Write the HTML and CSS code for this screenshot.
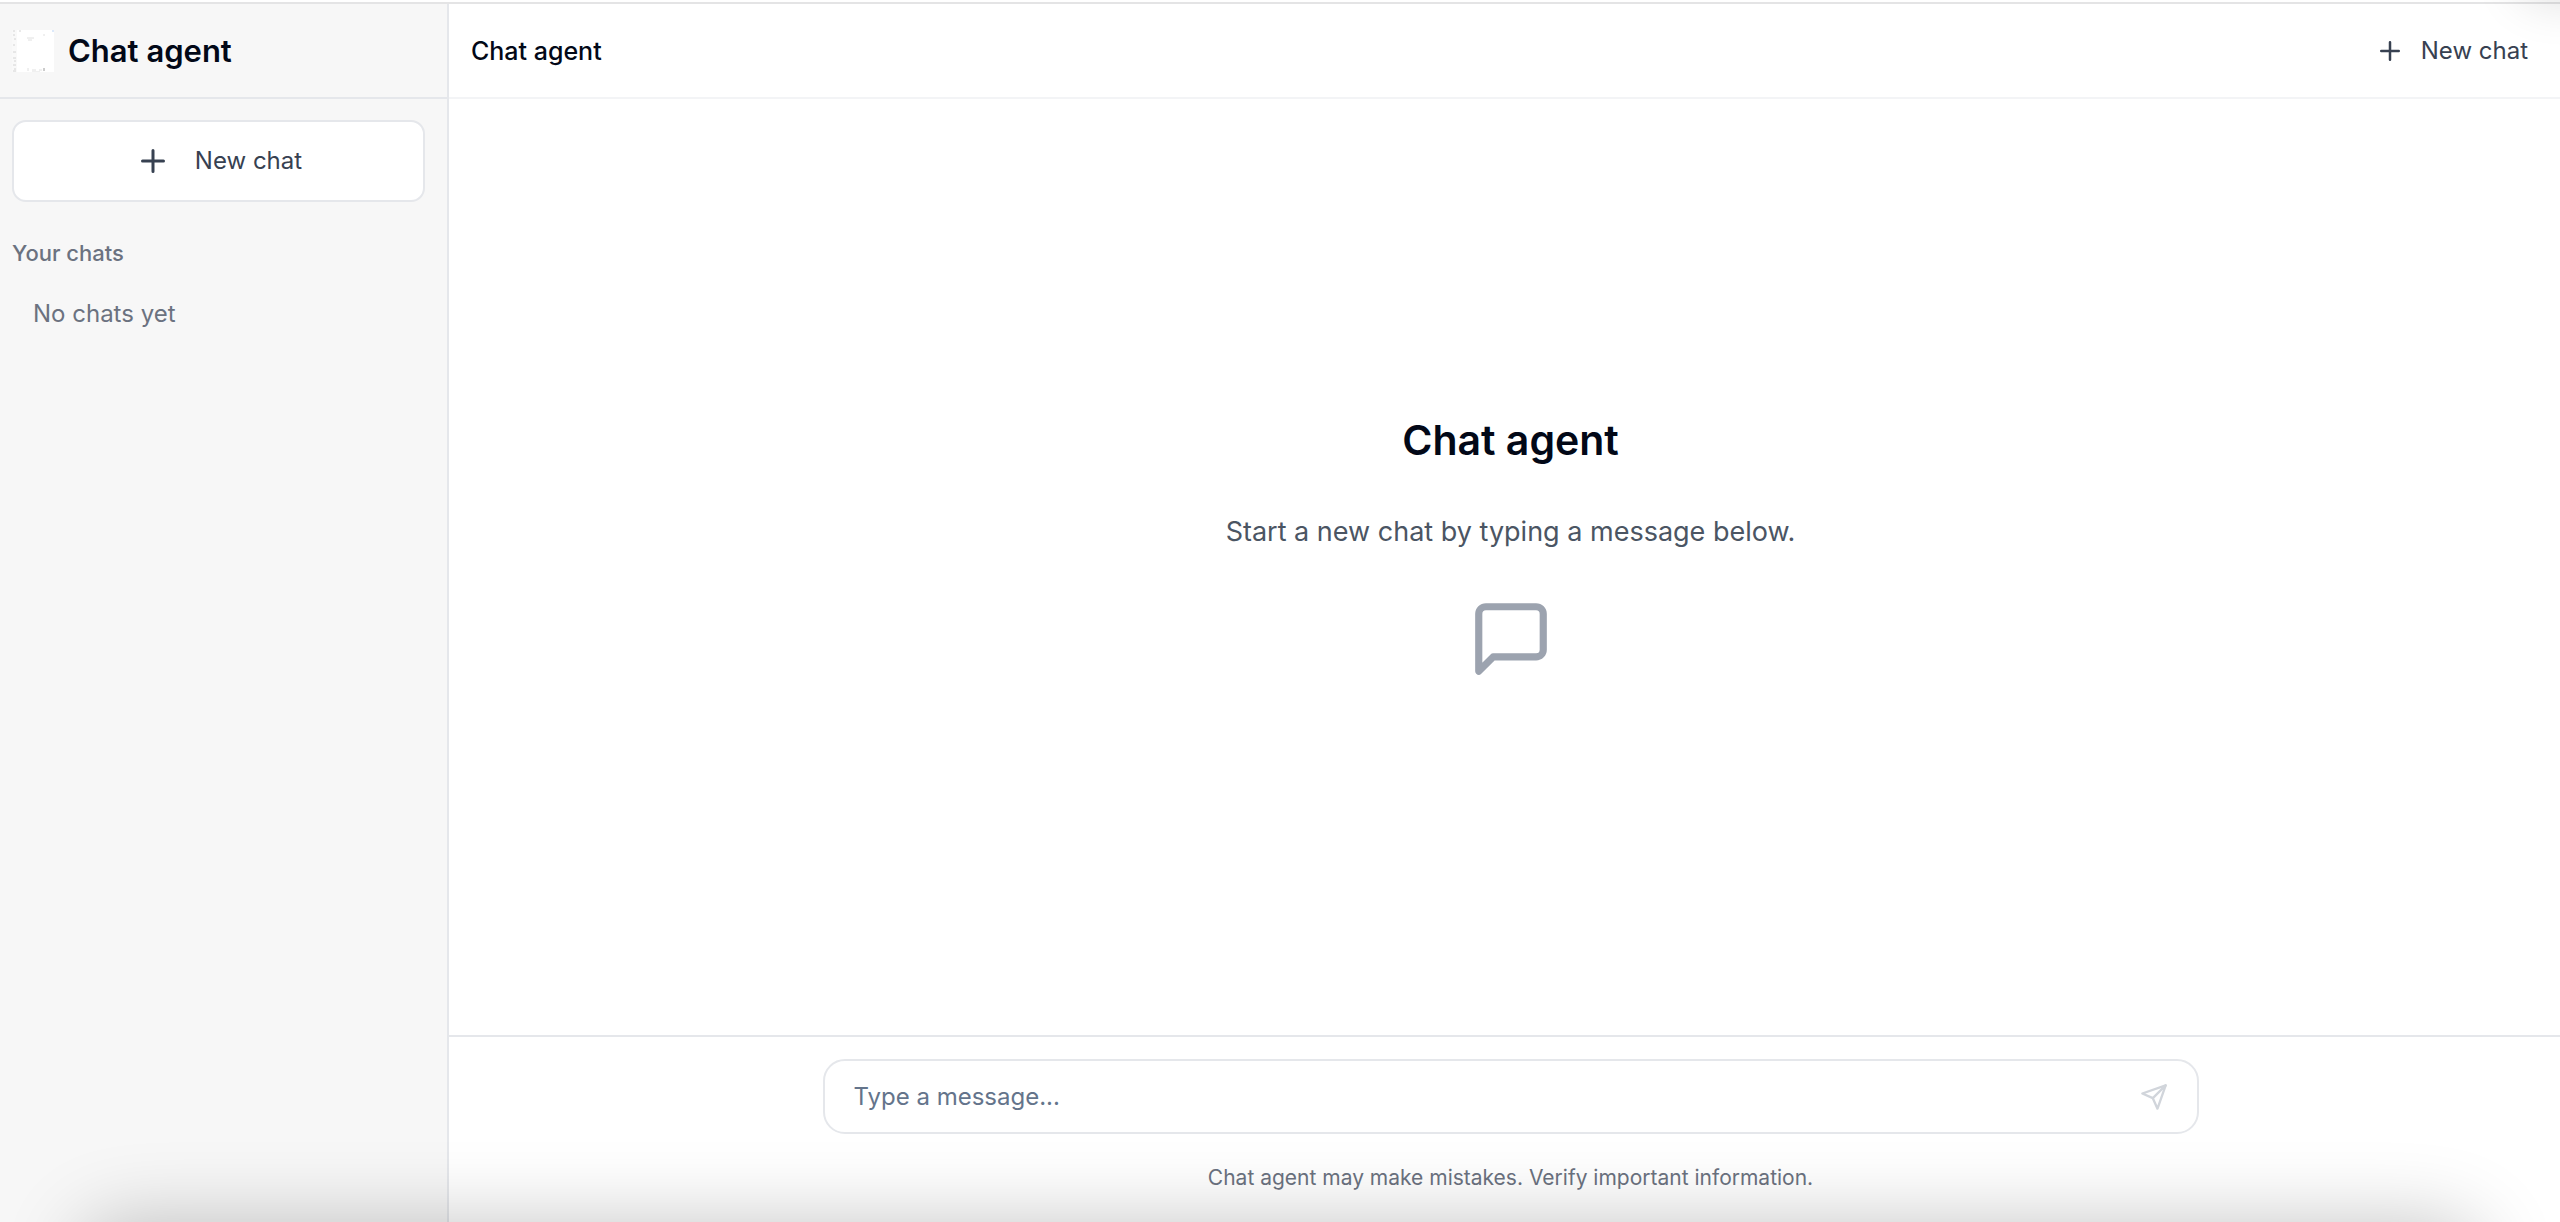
FILE: index.html
```html
<!DOCTYPE html>
<html lang="en">
<head>
    <meta charset="UTF-8">
    <meta name="viewport" content="width=device-width, initial-scale=1.0">
    <title>Chat agent</title>
    <link rel="stylesheet" href="styles.css">
</head>
<body>
    <div class="app">
        <aside class="sidebar">
            <div class="sidebar-header">
                <svg class="logo" viewBox="0 0 42 42" aria-hidden="true">
                    <rect width="42" height="42" fill="#fff"/>
                    <rect width="5" height="42" fill="#f9f9f9"/>
                    <path d="M1 1h2M7 1h2M1 5h2M2 9h2M1 15h2M1 22h3M1 28h3M2 31h2M1 35h3M2 39h2M1 41h3" stroke="#d4d4d4" stroke-width="1"/>
                    <path d="M15 8h7M16 10h4M32 4v2M16 38v3M20 40h4M27 40h3M20 42h8" stroke="#e0e0e0" stroke-width="1"/>
                    <path d="M32 38v3" stroke="#9a9a9a" stroke-width="1"/>
                    <path d="M40 1h2" stroke="#b9d3f5" stroke-width="1"/>
                </svg>
                <h1 class="brand">Chat agent</h1>
            </div>
            <div class="sidebar-body">
                <button type="button" class="new-chat">
                    <svg class="icon-plus-lg" viewBox="0 0 24 24" aria-hidden="true"><path d="M5 12h14M12 5v14"/></svg>
                    New chat
                </button>
                <h2 class="list-title">Your chats</h2>
                <p class="list-empty">No chats yet</p>
            </div>
        </aside>

        <main class="main">
            <header class="main-header">
                <h2 class="main-title">Chat agent</h2>
                <button type="button" class="header-btn">
                    <svg class="icon-plus" viewBox="0 0 24 24" aria-hidden="true"><path d="M5 12h14M12 5v14"/></svg>
                    New chat
                </button>
            </header>

            <section class="welcome">
                <h2 class="welcome-title">Chat agent</h2>
                <p class="welcome-text">Start a new chat by typing a message below.</p>
                <svg class="icon-message" viewBox="0 0 24 24" aria-hidden="true"><path d="M21 15a2 2 0 0 1-2 2H7l-4 4V5a2 2 0 0 1 2-2h14a2 2 0 0 1 2 2z"/></svg>
            </section>

            <footer class="composer">
                <form class="composer-box">
                    <input type="text" class="composer-input" placeholder="Type a message..." aria-label="Message">
                    <button type="submit" class="send-btn" aria-label="Send message" disabled>
                        <svg class="icon-send" viewBox="0 0 24 24" aria-hidden="true"><path d="m22 2-7 20-4-9-9-4Z"/><path d="M22 2 11 13"/></svg>
                    </button>
                </form>
                <p class="disclaimer">Chat agent may make mistakes. Verify important information.</p>
            </footer>
        </main>
    </div>
    <div class="shade shade-bottom"></div>
    <div class="shade shade-top"></div>
</body>
</html>
```
FILE: styles.css
```css
*{
    margin: 0;
    padding: 0;
    box-sizing: border-box;
}
body{
    font-family: Inter, "Liberation Sans", sans-serif;
    font-size: 24px;
    line-height: 36px;
    color: #020817;
    background-color: #fff;
    padding-top: 2px;
    overflow: hidden;
}
button, input{
    font: inherit;
    border: none;
    background: none;
}
button{
    color: #374151;
    cursor: pointer;
}
svg{
    flex: none;
    display: block;
    fill: none;
    stroke: currentColor;
    stroke-width: 2;
    stroke-linecap: round;
    stroke-linejoin: round;
}
.app{
    display: flex;
    height: calc(100vh - 2px);
    border-top: 2px solid #e4e4e5;
}

/* sidebar */
.sidebar{
    flex: none;
    width: 449px;
    background-color: #f7f7f7;
    border-right: 2px solid #e5e7eb;
}
.sidebar-header{
    display: flex;
    align-items: center;
    gap: 14px;
    height: 95px;
    padding: 0 12px;
    border-bottom: 2px solid #e5e7eb;
}
.logo{
    width: 42px;
    height: 42px;
    stroke: none;
    stroke-linecap: butt;
}
.brand{
    font-size: 31px;
    font-weight: 600;
}
.sidebar-body{
    padding: 21px 22px 0 12px;
}
.new-chat{
    display: flex;
    align-items: center;
    justify-content: center;
    gap: 24px;
    width: 100%;
    height: 82px;
    background-color: #fff;
    border: 2px solid #e5e7eb;
    border-radius: 14px;
}
.icon-plus-lg{
    width: 36px;
    height: 36px;
}
.list-title{
    margin-top: 33px;
    font-size: 22px;
    font-weight: 500;
    color: #6b7280;
}
.list-empty{
    margin-top: 25px;
    padding-left: 21px;
    color: #6b7280;
}

/* main column */
.main{
    flex: 1;
    min-width: 0;
    display: flex;
    flex-direction: column;
}
.main-header{
    display: flex;
    align-items: center;
    justify-content: space-between;
    height: 95px;
    padding: 0 32px 0 22px;
    border-bottom: 2px solid #f3f4f6;
}
.main-title{
    font-size: 25px;
    font-weight: 500;
}
.header-btn{
    display: flex;
    align-items: center;
    gap: 16px;
}
.icon-plus{
    width: 30px;
    height: 30px;
}
.welcome{
    flex: 1;
    display: flex;
    flex-direction: column;
    align-items: center;
    justify-content: center;
    padding: 0 24px 40px 36px;
    text-align: center;
}
.welcome-title{
    font-size: 41px;
    font-weight: 600;
    line-height: 56px;
}
.welcome-text{
    margin-top: 44px;
    font-size: 27px;
    line-height: 40px;
    color: #4b5563;
}
.icon-message{
    width: 86px;
    height: 86px;
    margin-top: 44px;
    color: #9ca3af;
}

/* message box */
.composer{
    padding: 22px 24px 26px 36px;
    border-top: 2px solid #e5e7eb;
}
.composer-box{
    display: flex;
    align-items: center;
    max-width: 1376px;
    height: 75px;
    margin: 0 auto;
    padding: 0 29px;
    border: 2px solid #e5e7eb;
    border-radius: 22px;
}
.composer-input{
    flex: 1;
    min-width: 0;
    height: 100%;
    color: #020817;
    outline: none;
}
.composer-input::placeholder{
    color: #64748b;
    opacity: 1;
}
.send-btn{
    color: #d1d5db;
}
.icon-send{
    width: 28px;
    height: 28px;
}
.disclaimer{
    margin-top: 26px;
    font-size: 21px;
    text-align: center;
    color: #6b7280;
}

/* soft shadows along the window edges */
.shade{
    position: fixed;
    pointer-events: none;
}
.shade-bottom{
    top: 100%;
    left: 80px;
    right: 80px;
    height: 200px;
    border-radius: 40px;
    box-shadow: 0 0 80px rgba(0, 0, 0, 0.23);
}
.shade-top{
    bottom: 100%;
    left: calc(100% - 40px);
    width: 120px;
    height: 80px;
    border-radius: 20px;
    box-shadow: 0 0 50px rgba(0, 0, 0, 0.14);
}
```
